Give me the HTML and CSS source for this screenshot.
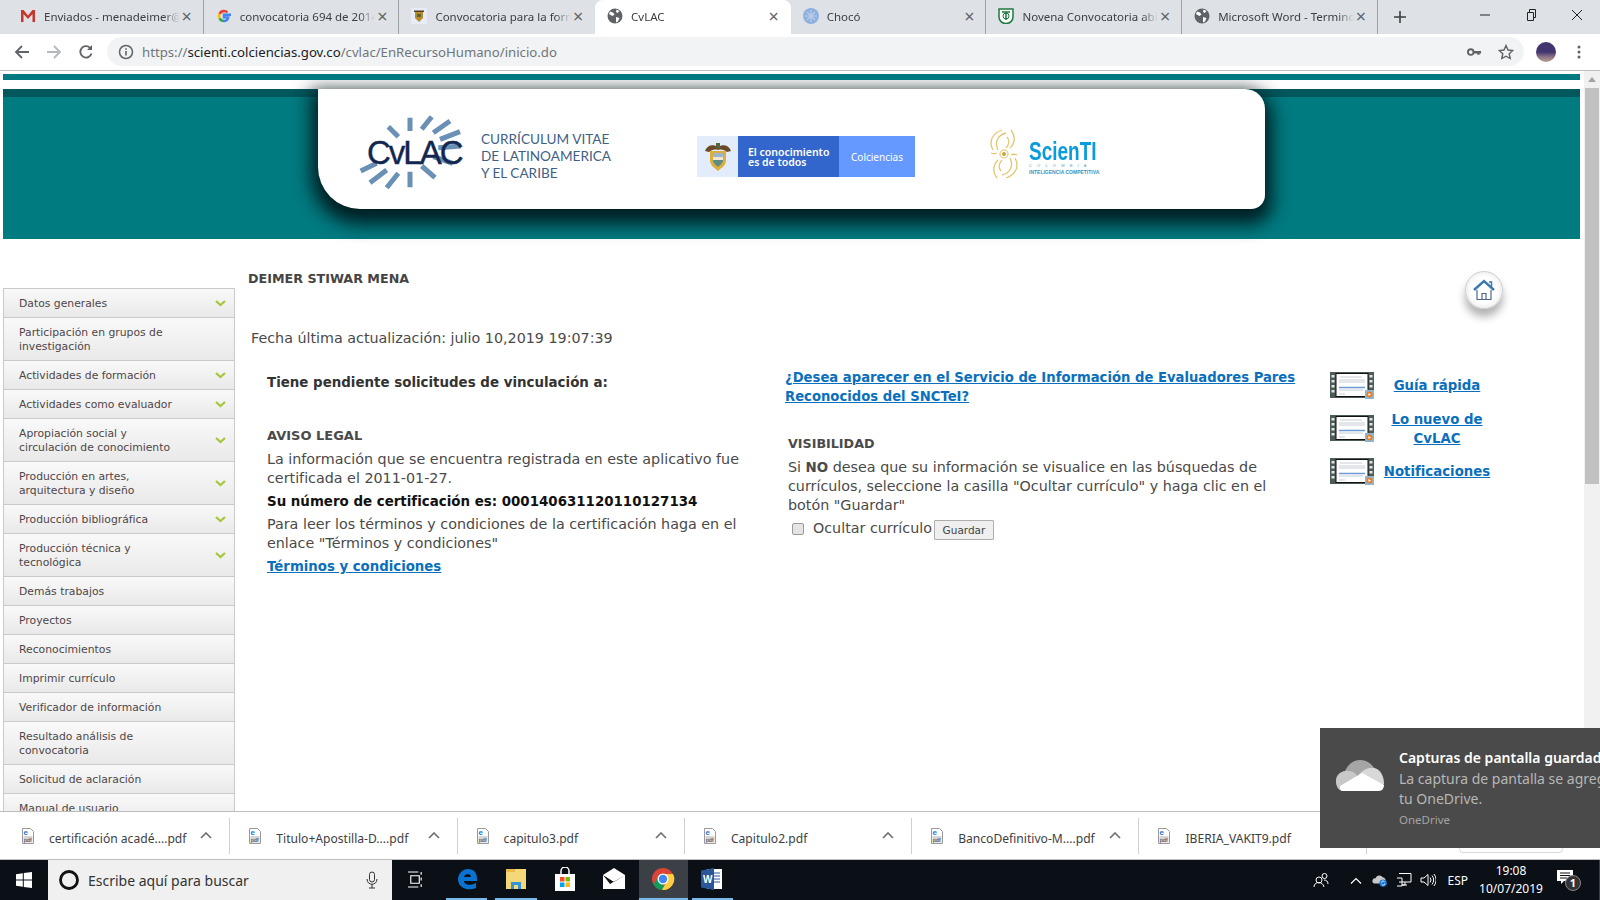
FILE: index.html
```html
<!DOCTYPE html>
<html lang="es">
<head>
    <meta charset="UTF-8">
    <title>CvLAC</title>
    <link rel="stylesheet" href="styles.css">
</head>
<body>
    <div class="tabstrip">
        <div class="tab">
            <svg class="favicon" viewBox="0 0 16 16"><path d="M1 2h2.500L8 7.500 12.500 2H15v12h-2.500V6L8 11 3.500 6v8H1z" fill="#c5372c"/></svg>
            <span class="tab-title">Enviados - menadeimer@gmail.com</span>
            <span class="tab-close">×</span>
        </div>
        <div class="tab">
            <svg class="favicon" viewBox="0 0 16 16"><path d="M15 6.800H8v2.600h4.200A4.500 4.500 0 0 1 8 13" fill="none" stroke="#4285f4" stroke-width="2.400"/><path d="M8 13a5 5 0 0 1-4.500-2.800" fill="none" stroke="#34a853" stroke-width="2.600"/><path d="M3.500 10.200a5 5 0 0 1 0-4.400" fill="none" stroke="#fbbc05" stroke-width="2.600"/><path d="M3.500 5.800A5 5 0 0 1 11.400 4.400" fill="none" stroke="#ea4335" stroke-width="2.600"/></svg>
            <span class="tab-title">convocatoria 694 de 2014 colciencias</span>
            <span class="tab-close">×</span>
        </div>
        <div class="tab">
            <svg class="favicon" viewBox="0 0 16 16"><rect width="16" height="16" fill="#e6ecf8"/><path d="M4 4h8v6l-4 4-4-4z" fill="#b98a2c"/><path d="M6 6h4v3H6z" fill="#55663a"/><path d="M3 2.500h10V4H3z" fill="#5a3d22"/></svg>
            <span class="tab-title">Convocatoria para la formación</span>
            <span class="tab-close">×</span>
        </div>
        <div class="tab tab-active">
            <svg class="favicon" viewBox="0 0 16 16"><circle cx="8" cy="8" r="7.500" fill="#5f6368"/><path d="M3 3.500l3 1 1.500 2-2 1.500-1-.5L2 6zM9 9l3.500 1-1.500 3.500-2 1zM9.500 1.500l3 1.500-2 2-1.500-1z" fill="#fff"/></svg>
            <span class="tab-title">CvLAC</span>
            <span class="tab-close">×</span>
        </div>
        <div class="tab">
            <svg class="favicon" viewBox="0 0 16 16"><circle cx="8" cy="8" r="8" fill="#8fb0df"/><path d="M8 2v12M2 8h12M4 4l8 8M12 4l-8 8" stroke="#b9cdea" stroke-width="1.200"/></svg>
            <span class="tab-title">Chocó</span>
            <span class="tab-close">×</span>
        </div>
        <div class="tab">
            <svg class="favicon" viewBox="0 0 16 16"><path d="M1 1h14v8a7 6.500 0 0 1-14 0z" fill="#fff" stroke="#1d7a3e" stroke-width="1.500"/><path d="M4 4h8M8 4v8" stroke="#1d7a3e" stroke-width="1.500"/><circle cx="8" cy="8" r="3" fill="none" stroke="#1d7a3e"/></svg>
            <span class="tab-title">Novena Convocatoria abierta</span>
            <span class="tab-close">×</span>
        </div>
        <div class="tab tab-last">
            <svg class="favicon" viewBox="0 0 16 16"><circle cx="8" cy="8" r="7.500" fill="#5f6368"/><path d="M3 3.500l3 1 1.500 2-2 1.500-1-.5L2 6zM9 9l3.500 1-1.500 3.500-2 1zM9.500 1.500l3 1.500-2 2-1.500-1z" fill="#fff"/></svg>
            <span class="tab-title">Microsoft Word - Terminos y condiciones</span>
            <span class="tab-close">×</span>
        </div>
        <svg class="new-tab" viewBox="0 0 12 12"><path d="M6 0v12M0 6h12" stroke="#3c4043" stroke-width="1.600"/></svg>
        <div class="window-buttons">
            <svg viewBox="0 0 12 12"><path d="M1 6h10" stroke="#222" stroke-width="1"/></svg>
            <svg viewBox="0 0 12 12"><path d="M2.500 3.500h6v8h-6zM4.500 3.500v-3h6v8h-2" fill="none" stroke="#222"/></svg>
            <svg viewBox="0 0 12 12"><path d="M1 1l10 10M11 1L1 11" stroke="#222"/></svg>
        </div>
    </div>

    <div class="toolbar">
        <svg class="tool-icon" viewBox="0 0 16 16"><path d="M15 8H2M8 2L2 8l6 6" fill="none" stroke="#5f6368" stroke-width="1.800"/></svg>
        <svg class="tool-icon" viewBox="0 0 16 16"><path d="M1 8h13M8 2l6 6-6 6" fill="none" stroke="#b4b7bb" stroke-width="1.800"/></svg>
        <svg class="tool-icon" viewBox="0 0 16 16"><path d="M13.500 9.500A5.700 5.700 0 1 1 12 3.800" fill="none" stroke="#5f6368" stroke-width="1.800"/><path d="M14 1v5H9z" fill="#5f6368"/></svg>
        <div class="omnibox">
            <svg class="info-icon" viewBox="0 0 16 16"><circle cx="8" cy="8" r="6.500" fill="none" stroke="#5f6368" stroke-width="1.500"/><path d="M8 7v4.500M8 4.300v1.500" stroke="#5f6368" stroke-width="1.600"/></svg>
            <span class="url"><span class="url-dim">https://</span>scienti.colciencias.gov.co<span class="url-dim">/cvlac/EnRecursoHumano/inicio.do</span></span>
            <svg class="key-icon" viewBox="0 0 16 10"><circle cx="4" cy="5" r="3" fill="none" stroke="#5f6368" stroke-width="2"/><path d="M7 4h8v2.500h-1.500V8H11V6.500H7z" fill="#5f6368"/></svg>
            <svg class="star-icon" viewBox="0 0 16 16"><path d="M8 1.500l2 4.500 4.800.5-3.600 3.200 1 4.800L8 12.200l-4.200 2.300 1-4.800L1.200 6.500 6 6z" fill="none" stroke="#5f6368" stroke-width="1.400"/></svg>
        </div>
        <div class="avatar"></div>
        <svg class="menu-dots" viewBox="0 0 4 16"><circle cx="2" cy="3" r="1.500" fill="#5f6368"/><circle cx="2" cy="8" r="1.500" fill="#5f6368"/><circle cx="2" cy="13" r="1.500" fill="#5f6368"/></svg>
    </div>

    <div class="viewport">
        <div class="page">
            <div class="top-line"></div>
            <div class="banner">
                <div class="banner-card">
                    <div class="cvlac-logo">
                        <svg class="cvlac-rays" viewBox="0 0 110 80">
                            <path d="M30.300 13.700L40.300 23.700M52 4.700V18M73.700 3.700L63.700 16.300M92 8L75.300 19.700M102 18.700L82 26.300M103 33L80.300 34.700M94.700 50.300L75.300 43.700M77 64.700L63.700 53M52 58.700V74.300M40.300 60.300L28.700 74.700M28.700 57L12 69.700M18.700 50.300L2.700 58" stroke="#6b90b6" stroke-width="5"/>
                        </svg>
                        <span class="cvlac-word">CvLAC</span>
                    </div>
                    <p class="cvlac-tagline">CURRÍCULUM VITAE<br>DE LATINOAMERICA<br>Y EL CARIBE</p>
                    <div class="gov-logo">
                        <div class="gov-shield">
                            <svg viewBox="0 0 28 30">
                                <path d="M1 9C3 3 9 2 14 5c5-3 11-2 13 4l-4 1c-2-2-6-3-9-2-3-1-7 0-9 2z" fill="#6b4a2a"/>
                                <path d="M12 1h4v5h-4z" fill="#55663a"/>
                                <path d="M6 9h16v9c0 6-5 8-8 11-3-3-8-5-8-11z" fill="#dcae3a"/>
                                <path d="M9 11h10v4H9z" fill="#9cb5cf"/>
                                <path d="M9 15h10v3H9z" fill="#eee8d2"/>
                                <path d="M9 18h10c0 3-3 5-5 7-2-2-5-4-5-7z" fill="#5c8c86"/>
                            </svg>
                        </div>
                        <div class="gov-motto">El conocimiento<br>es de todos</div>
                        <div class="gov-name">Colciencias</div>
                    </div>
                    <div class="scienti-logo">
                        <svg class="scienti-spiral" viewBox="0 0 32 50">
                            <g fill="none" stroke="#e3c672" stroke-width="1.300">
                                <g>
                                    <path d="M14 1C5 4 0 12 5 21M18 4C10 6 6 13 10 21"/>
                                    <path d="M23 1c4 5 5 12-1 18M19 8c3 3 2 8-1 11"/>
                                    <path d="M3 24c2 1 4 1 6 0"/>
                                </g>
                                <g transform="rotate(180 16 25)">
                                    <path d="M14 1C5 4 0 12 5 21M18 4C10 6 6 13 10 21"/>
                                    <path d="M23 1c4 5 5 12-1 18M19 8c3 3 2 8-1 11"/>
                                    <path d="M3 24c2 1 4 1 6 0"/>
                                </g>
                            </g>
                            <circle cx="16" cy="25" r="4" fill="none" stroke="#e8d595" stroke-width="1.500"/>
                            <circle cx="16" cy="25" r="2" fill="#cda23a"/>
                        </svg>
                        <div class="scienti-text">
                            <div class="scienti-word">ScienTI</div>
                            <div class="scienti-country">COLOMBIA</div>
                            <div class="scienti-sub">INTELIGENCIA COMPETITIVA</div>
                        </div>
                    </div>
                </div>
            </div>

            <div class="content">
                <ul class="sidenav">
                    <li class="has-arrow">Datos generales</li>
                    <li>Participación en grupos de<br>investigación</li>
                    <li class="has-arrow">Actividades de formación</li>
                    <li class="has-arrow">Actividades como evaluador</li>
                    <li class="has-arrow">Apropiación social y<br>circulación de conocimiento</li>
                    <li class="has-arrow">Producción en artes,<br>arquitectura y diseño</li>
                    <li class="has-arrow">Producción bibliográfica</li>
                    <li class="has-arrow">Producción técnica y<br>tecnológica</li>
                    <li>Demás trabajos</li>
                    <li>Proyectos</li>
                    <li>Reconocimientos</li>
                    <li>Imprimir currículo</li>
                    <li>Verificador de información</li>
                    <li>Resultado análisis de<br>convocatoria</li>
                    <li>Solicitud de aclaración</li>
                    <li>Manual de usuario</li>
                </ul>

                <div class="main">
                    <div class="name-row">
                        <h1 class="person-name">DEIMER STIWAR MENA</h1>
                        <div class="home-button">
                            <svg viewBox="0 0 24 22"><path d="M2 11L12 2l10 9" fill="none" stroke="#3d78ad" stroke-width="2.400"/><path d="M17 3h2.500v5" fill="none" stroke="#3d78ad" stroke-width="1.500"/><path d="M5 11v9.500h14V11M10 20.500v-6h4v6" fill="none" stroke="#50678a" stroke-width="1.200"/></svg>
                        </div>
                    </div>
                    <p class="updated">Fecha última actualización: julio 10,2019 19:07:39</p>

                    <div class="columns">
                        <div class="col-legal">
                            <p class="pending">Tiene pendiente solicitudes de vinculación a:</p>
                            <h2 class="section-title">AVISO LEGAL</h2>
                            <p>La información que se encuentra registrada en este aplicativo fue certificada el 2011-01-27.</p>
                            <p class="cert-number">Su número de certificación es: 000140631120110127134</p>
                            <p>Para leer los términos y condiciones de la certificación haga en el enlace "Términos y condiciones"</p>
                            <a class="link terms-link" href="#">Términos y condiciones</a>
                        </div>

                        <div class="col-visibility">
                            <a class="link evaluators-link" href="#">¿Desea aparecer en el Servicio de Información de Evaluadores Pares Reconocidos del SNCTeI?</a>
                            <div class="visibility-box">
                                <h2 class="section-title">VISIBILIDAD</h2>
                                <p>Si <b>NO</b> desea que su información se visualice en las búsquedas de currículos, seleccione la casilla "Ocultar currículo" y haga clic en el botón "Guardar"</p>
                                <div class="hide-row">
                                    <input type="checkbox" class="hide-check">
                                    <span>Ocultar currículo</span>
                                    <button class="save-button">Guardar</button>
                                </div>
                            </div>
                        </div>

                        <div class="col-help">
                            <div class="help-row">
                                <svg class="film-icon" viewBox="0 0 44 27"><use href="#film"/></svg>
                                <a class="link" href="#">Guía rápida</a>
                            </div>
                            <div class="help-row">
                                <svg class="film-icon" viewBox="0 0 44 27"><use href="#film"/></svg>
                                <a class="link" href="#">Lo nuevo de CvLAC</a>
                            </div>
                            <div class="help-row">
                                <svg class="film-icon" viewBox="0 0 44 27"><use href="#film"/></svg>
                                <a class="link" href="#">Notificaciones</a>
                            </div>
                        </div>
                    </div>
                </div>
            </div>
        </div>
        <div class="scrollbar">
            <svg class="scroll-arrow" viewBox="0 0 8 5"><path d="M4 0l4 5H0z" fill="#a3a3a3"/></svg>
            <div class="scroll-thumb"></div>
        </div>
    </div>

    <div class="downloads">
        <div class="download"><svg class="pdf-icon" viewBox="0 0 12 16"><use href="#pdf"/></svg><span class="download-name">certificación acadé....pdf</span><svg class="download-caret" viewBox="0 0 12 7"><path d="M1 6l5-5 5 5" fill="none" stroke="#6e6e6e" stroke-width="1.600"/></svg></div>
        <div class="download"><svg class="pdf-icon" viewBox="0 0 12 16"><use href="#pdf"/></svg><span class="download-name">Titulo+Apostilla-D....pdf</span><svg class="download-caret" viewBox="0 0 12 7"><path d="M1 6l5-5 5 5" fill="none" stroke="#6e6e6e" stroke-width="1.600"/></svg></div>
        <div class="download"><svg class="pdf-icon" viewBox="0 0 12 16"><use href="#pdf"/></svg><span class="download-name">capitulo3.pdf</span><svg class="download-caret" viewBox="0 0 12 7"><path d="M1 6l5-5 5 5" fill="none" stroke="#6e6e6e" stroke-width="1.600"/></svg></div>
        <div class="download"><svg class="pdf-icon" viewBox="0 0 12 16"><use href="#pdf"/></svg><span class="download-name">Capitulo2.pdf</span><svg class="download-caret" viewBox="0 0 12 7"><path d="M1 6l5-5 5 5" fill="none" stroke="#6e6e6e" stroke-width="1.600"/></svg></div>
        <div class="download"><svg class="pdf-icon" viewBox="0 0 12 16"><use href="#pdf"/></svg><span class="download-name">BancoDefinitivo-M....pdf</span><svg class="download-caret" viewBox="0 0 12 7"><path d="M1 6l5-5 5 5" fill="none" stroke="#6e6e6e" stroke-width="1.600"/></svg></div>
        <div class="download"><svg class="pdf-icon" viewBox="0 0 12 16"><use href="#pdf"/></svg><span class="download-name">IBERIA_VAKIT9.pdf</span><svg class="download-caret" viewBox="0 0 12 7"><path d="M1 6l5-5 5 5" fill="none" stroke="#6e6e6e" stroke-width="1.600"/></svg></div>
        <button class="show-all"></button>
    </div>

    <div class="taskbar">
        <div class="start-button">
            <svg viewBox="0 0 16 16"><path d="M0 2.200L6.800 1.200V7.500H0zM7.800 1L16 0v7.500H7.800zM0 8.500h6.800v6.300L0 13.800zM7.800 8.500H16V16l-8.200-1.100z" fill="#fff"/></svg>
        </div>
        <div class="search-box">
            <svg class="cortana" viewBox="0 0 22 22"><circle cx="11" cy="11" r="8.500" fill="none" stroke="#111" stroke-width="2.800"/></svg>
            <span class="search-text">Escribe aquí para buscar</span>
            <svg class="mic" viewBox="0 0 12 18"><rect x="3.500" y="1" width="5" height="10" rx="2.500" fill="none" stroke="#333"/><path d="M1 8c0 7 10 7 10 0M6 13v4M3 17h6" fill="none" stroke="#333"/></svg>
        </div>
        <div class="task-icons">
            <div class="task-icon">
                <svg viewBox="0 0 18 18"><path d="M1 1h11M1 17h11M4 5h9v8H4zM15 1v3M15 7v3M15 14v3" fill="none" stroke="#fff" stroke-width="1.200"/></svg>
            </div>
            <div class="task-icon task-open">
                <svg viewBox="0 0 24 24"><path d="M3 13C3 6 8 2 13 2c6 0 9 4 9 10v2H9c0 4 7 5 12 2v5c-7 3-17 1-18-8zm6-3h7c0-4-6-4-7 0z" fill="#0a72d0"/></svg>
            </div>
            <div class="task-icon task-open">
                <svg viewBox="0 0 24 24"><path d="M2 2h20v20H2z" fill="#f6d778"/><path d="M2 2h9v3H2z" fill="#e9b949"/><path d="M7 22v-7h10v7h-3v-4h-4v4z" fill="#2f95d6"/></svg>
            </div>
            <div class="task-icon">
                <svg viewBox="0 0 24 24"><path d="M2 7h20v17H2z" fill="#fff"/><path d="M8 8V4a4 4 0 0 1 8 0v4" fill="none" stroke="#fff" stroke-width="1.500"/><path d="M7 10h4.500v4.500H7z" fill="#f25022"/><path d="M12.500 10H17v4.500h-4.500z" fill="#7fba00"/><path d="M7 15.500h4.500V20H7z" fill="#00a4ef"/><path d="M12.500 15.500H17V20h-4.500z" fill="#ffb900"/></svg>
            </div>
            <div class="task-icon">
                <svg viewBox="0 0 24 24"><path d="M1 8l11-7 11 7v14H1z" fill="#fff"/><path d="M1 8l11 7 11-7-15 9z" fill="#111"/></svg>
            </div>
            <div class="task-icon task-open task-active">
                <svg viewBox="0 0 24 24"><circle cx="12" cy="12" r="11" fill="#db4437"/><path d="M12 23a11 11 0 0 1-9.500-5.500L8 8l4 8z" fill="#0f9d58"/><path d="M12 7h10a11 11 0 0 1-11 16l5-9z" fill="#ffcd40"/><circle cx="12" cy="12" r="5.500" fill="#fff"/><circle cx="12" cy="12" r="4.200" fill="#4285f4"/></svg>
            </div>
            <div class="task-icon task-open">
                <svg viewBox="0 0 24 24"><path d="M7 2h15v20H7z" fill="#fff"/><path d="M14 6h6M14 9h6M14 12h6M14 15h6" stroke="#2b579a"/><path d="M1 3.500L14 1v22L1 20.500z" fill="#2b579a"/><text x="3" y="16" font-family="Liberation Sans, sans-serif" font-size="10" font-weight="700" fill="#fff">W</text></svg>
            </div>
        </div>
        <div class="tray">
            <svg class="tray-icon" viewBox="0 0 16 16"><circle cx="6" cy="8" r="3" fill="none" stroke="#fff"/><path d="M1 15c0-6 9-6 10 0" fill="none" stroke="#fff"/><circle cx="11.500" cy="4" r="2.500" fill="none" stroke="#fff"/><path d="M11 8c2 0 4 1 4 4" fill="none" stroke="#fff"/></svg>
            <svg class="tray-caret" viewBox="0 0 12 7"><path d="M1 6.500l5-5 5 5" fill="none" stroke="#fff" stroke-width="1.200"/></svg>
            <svg class="tray-icon" viewBox="0 0 18 16"><path d="M3 12a3 3 0 0 1 1-6 4.500 4.500 0 0 1 8-1 3.500 3.500 0 0 1 3 5v2z" fill="#c9c9c9"/><circle cx="12.500" cy="11.500" r="4.200" fill="#1a78d2"/><path d="M10.500 11a2 2 0 0 1 3.600-1M14.500 12a2 2 0 0 1-3.600 1" fill="none" stroke="#fff"/></svg>
            <svg class="tray-icon" viewBox="0 0 16 16"><path d="M3 1.500h12V10H3M1 6h5v8H1M9 10v3h-3M6 13h5" fill="none" stroke="#fff"/></svg>
            <svg class="tray-icon" viewBox="0 0 16 16"><path d="M1 6h3l4-3.500v11L4 10H1z" fill="none" stroke="#fff"/><path d="M10 5.500a4 4 0 0 1 0 5M12 3.500a7 7 0 0 1 0 9M14 2a9.500 9.500 0 0 1 0 12" fill="none" stroke="#fff"/></svg>
            <span class="tray-lang">ESP</span>
            <div class="tray-clock">19:08<br>10/07/2019</div>
            <div class="tray-action">
                <svg viewBox="0 0 16 15"><path d="M0 0h16v11H7l-3 3v-3H0z" fill="#fff"/><path d="M3 3h10M3 5.500h10M3 8h7" stroke="#0b0f16"/></svg>
                <span class="action-badge">1</span>
            </div>
        </div>
    </div>

    <div class="toast">
        <svg class="toast-cloud" viewBox="0 0 48 31">
            <path d="M11 31C5 31 0 27 0 21s4-9 9-10c3-7 9-11 15-11 6 0 11 3 14 8l-11 13z" fill="#a5a5a5"/>
            <path d="M6 31C2 30 0 26 0 21s4-9 9-10c5-1 10 1 13 6l-6 14z" fill="#c8c8c8"/>
            <path d="M22 16c5-8 14-10 19-7 5 3 7 9 7 15l-8 7z" fill="#d8d8d8"/>
            <path d="M6 31h37c3 0 5-3 5-6L26 13 4 26c0 2 0 4 2 5z" fill="#fff"/>
        </svg>
        <div class="toast-body">
            <div class="toast-title">Capturas de pantalla guardadas</div>
            <div class="toast-text">La captura de pantalla se agregó a<br>tu OneDrive.</div>
            <div class="toast-app">OneDrive</div>
        </div>
    </div>

    <svg class="svg-defs">
        <symbol id="film" viewBox="0 0 44 27">
            <rect x="0" y="0" width="44" height="26" fill="#4c5a58"/>
            <rect x="6" y="1.500" width="32" height="23" fill="#fff" stroke="#111"/>
            <path d="M1.500 3h3v2.500h-3zM1.500 8h3v2.500h-3zM1.500 13h3v2.500h-3zM1.500 18h3v2.500h-3zM39.500 3h3v2.500h-3zM39.500 8h3v2.500h-3zM39.500 13h3v2.500h-3zM39.500 18h3v2.500h-3z" fill="#dfe5e4"/>
            <path d="M10 5h22M9 8h26M9 10h26" stroke="#b9c0cc" stroke-width="0.800"/>
            <path d="M9 15.500h26" stroke="#6d9bd2" stroke-width="1.500"/>
            <path d="M9 18h24M9 22h6" stroke="#b9c0cc" stroke-width="0.800"/>
            <rect x="35" y="18" width="9" height="9" fill="#8eb7cf"/>
            <circle cx="39.500" cy="22.500" r="3" fill="#f27b1c"/>
            <path d="M38.500 21v3l2.500-1.500z" fill="#fff"/>
        </symbol>
        <symbol id="pdf" viewBox="0 0 12 16">
            <path d="M.5.500h8l3 3v12H.500z" fill="#fff" stroke="#9a9a9a"/>
            <rect x="1.500" y="8" width="9" height="6.500" fill="#d5d5d5"/>
            <text x="1.500" y="7" font-family="Liberation Sans, sans-serif" font-size="8" font-weight="700" fill="#1a78d2">e</text>
            <text x="1.800" y="13.500" font-family="Liberation Sans, sans-serif" font-size="5.500" fill="#333">pdf</text>
        </symbol>
    </svg>
</body>
</html>
```

FILE: styles.css
```css
* {
    box-sizing: border-box;
}

body, html {
    height: 100%;
    margin: 0;
    background-color: #fff;
    font-family: "DejaVu Sans", sans-serif;
    overflow: hidden;
}

p, h1, h2, ul {
    margin: 0;
    padding: 0;
}

/* browser chrome */
.tabstrip {
    display: flex;
    align-items: center;
    height: 34px;
    padding-left: 8px;
    background-color: #dee1e6;
    font-family: "Noto Sans", sans-serif;
    font-size: 11.5px;
    color: #3c4043;
}

.tab {
    position: relative;
    display: flex;
    align-items: center;
    flex: none;
    width: 195.700px;
    height: 34px;
    padding: 0 9px 2px 12px;
    border-right: 1px solid #9ea1a6;
}

.tab:nth-child(3),
.tab:nth-child(4) {
    border-right-color: transparent;
}

.tab-active {
    background-color: #fff;
    border-radius: 8px 8px 0 0;
}

.favicon {
    flex: none;
    width: 16px;
    height: 16px;
    margin-right: 8px;
}

.tab-title {
    flex: 1;
    overflow: hidden;
    white-space: nowrap;
    -webkit-mask-image: linear-gradient(to right, #000 88%, transparent);
    mask-image: linear-gradient(to right, #000 88%, transparent);
}

.tab-close {
    flex: none;
    width: 14px;
    font-size: 18px;
    line-height: 1;
    text-align: center;
    color: #5f6368;
}

.new-tab {
    width: 12px;
    height: 12px;
    margin-left: 16px;
}

.window-buttons {
    display: flex;
    gap: 34px;
    margin-left: auto;
    margin-right: 17px;
    margin-top: -5px;
}

.window-buttons svg {
    width: 12px;
    height: 12px;
}

.toolbar {
    display: flex;
    align-items: center;
    height: 37px;
    padding: 0 0 1px 14px;
    background-color: #fff;
    border-bottom: 1px solid #bdbdbd;
}

.tool-icon {
    flex: none;
    width: 16px;
    height: 16px;
    margin-right: 16px;
}

.omnibox {
    display: flex;
    align-items: center;
    width: 1417px;
    height: 29px;
    margin-left: -3px;
    padding: 0 10px 0 11px;
    background-color: #f1f3f4;
    border-radius: 15px;
    font-family: "Noto Sans", sans-serif;
    font-size: 13.200px;
    color: #202124;
}

.info-icon {
    width: 16px;
    height: 16px;
    margin-right: 8px;
}

.url {
    flex: 1;
}

.url-dim {
    color: #70757a;
}

.key-icon {
    width: 15px;
    height: 10px;
    margin-right: 16px;
}

.star-icon {
    width: 16px;
    height: 16px;
}

.avatar {
    flex: none;
    width: 20px;
    height: 20px;
    margin-left: 12px;
    border-radius: 50%;
    background: linear-gradient(#43356e 50%, #8d7488 75%, #b59f8b);
}

.menu-dots {
    flex: none;
    width: 4px;
    height: 16px;
    margin-left: 21px;
}

/* page area */
.viewport {
    display: flex;
    height: 740px;
    overflow: hidden;
}

.page {
    flex: 1;
    min-width: 0;
    padding-top: 3px;
    padding-right: 4px;
}

.top-line {
    height: 6px;
    margin-left: 3px;
    background-color: #007a80;
}

.banner {
    height: 150px;
    margin: 9px 0 0 3px;
    background: linear-gradient(#00575c 8px, #007b80 8px);
    position: relative;
}

.banner-card {
    display: flex;
    align-items: center;
    width: 947px;
    height: 120px;
    margin-left: 315px;
    padding-top: 12px;
    background-color: #fff;
    border-radius: 0 20px 14px 42px;
    box-shadow: 0 8px 18px 7px rgba(0, 20, 24, 0.9);
    clip-path: inset(-9px -30px -40px -30px);
}

.cvlac-logo {
    position: relative;
    flex: none;
    width: 110px;
    height: 80px;
    margin-left: 40px;
    margin-top: -4px;
}

.cvlac-rays {
    width: 110px;
    height: 80px;
}

.cvlac-word {
    position: absolute;
    left: 9px;
    top: 20px;
    font-family: "Liberation Sans", sans-serif;
    font-size: 33px;
    line-height: 40px;
    letter-spacing: -2px;
    color: #12264f;
    -webkit-text-stroke: 0.4px #12264f;
}

.cvlac-tagline {
    flex: none;
    width: 215px;
    margin-left: 13px;
    margin-right: 1px;
    margin-top: 2px;
    font-family: "Lato", sans-serif;
    font-size: 13.600px;
    line-height: 17px;
    color: #3f5f85;
}

.gov-logo {
    display: flex;
    flex: none;
    width: 218px;
    height: 41px;
    margin-top: 3px;
    font-family: "Noto Sans", sans-serif;
    color: #fff;
}

.gov-shield {
    display: flex;
    align-items: center;
    justify-content: center;
    width: 41px;
    background-color: #e3ecfb;
}

.gov-shield svg {
    width: 28px;
    height: 30px;
}

.gov-motto {
    display: flex;
    align-items: center;
    width: 101px;
    padding-left: 10px;
    background-color: #3366cc;
    font-size: 10.5px;
    font-weight: 600;
    line-height: 10px;
}

.gov-name {
    display: flex;
    align-items: center;
    justify-content: center;
    width: 76px;
    background-color: #6699ff;
    font-size: 10px;
}

.scienti-logo {
    display: flex;
    align-items: center;
    flex: none;
    margin-left: 73px;
    margin-top: -2px;
}

.scienti-spiral {
    width: 32px;
    height: 50px;
}

.scienti-text {
    margin-left: 9px;
    margin-top: 6px;
    width: 68px;
    font-family: "Liberation Sans", sans-serif;
}

.scienti-word {
    font-size: 25px;
    font-weight: 700;
    line-height: 24px;
    color: #0a9bdc;
    transform-origin: left center;
    transform: scaleX(0.76);
    white-space: nowrap;
}

.scienti-country {
    font-size: 4px;
    line-height: 6px;
    letter-spacing: 5.200px;
    color: #5d9fc2;
}

.scienti-sub {
    font-size: 5px;
    font-weight: 700;
    line-height: 7px;
    color: #3c93c0;
    white-space: nowrap;
}

.content {
    display: flex;
    align-items: flex-start;
    margin-left: 3px;
}

.sidenav {
    flex: none;
    width: 232px;
    margin-top: 49px;
    list-style: none;
    border: 1px solid #cacaca;
    border-bottom: none;
    font-size: 10.800px;
    line-height: 14px;
    color: #4f4648;
}

.sidenav li {
    padding: 8px 15px 6px;
    border-bottom: 1px solid #cacaca;
    background: linear-gradient(#f9f9f9, #e9e9e9);
}

.sidenav .has-arrow {
    background-image:
        url("data:image/svg+xml,%3Csvg xmlns='http://www.w3.org/2000/svg' width='11' height='7'%3E%3Cpath d='M1 1l4.500 4L10 1' fill='none' stroke='%23a5c63b' stroke-width='2.200'/%3E%3C/svg%3E"),
        linear-gradient(#f9f9f9, #e9e9e9);
    background-repeat: no-repeat;
    background-position: right 8px center, 0 0;
}

.main {
    flex: 1;
    min-width: 0;
    padding-left: 13px;
    font-size: 14.300px;
    line-height: 19px;
    color: #4a4a4a;
}

.name-row {
    display: flex;
    justify-content: space-between;
    align-items: flex-start;
    height: 90px;
    padding-top: 30px;
    padding-right: 77px;
}

.person-name {
    font-size: 12.700px;
    font-weight: 700;
    line-height: 19px;
    color: #444;
}

.home-button {
    display: flex;
    align-items: center;
    justify-content: center;
    width: 38px;
    height: 38px;
    margin-top: 2px;
    border: 1px solid #cfcfcf;
    border-radius: 50%;
    background: radial-gradient(#fff 50%, #dedede);
    box-shadow: 0 8px 8px rgba(0, 0, 0, 0.3);
}

.home-button svg {
    width: 24px;
    height: 22px;
}

.updated {
    margin-left: 3px;
}

.columns {
    display: flex;
    align-items: flex-start;
    margin-top: 25px;
}

.col-legal {
    flex: none;
    width: 537px;
    padding-left: 19px;
    padding-right: 32px;
}

.pending {
    font-size: 13.400px;
    font-weight: 700;
    color: #333;
}

.section-title {
    margin-top: 34px;
    margin-bottom: 5px;
    font-size: 13px;
    line-height: 19px;
    font-weight: 700;
    color: #4a4a4a;
}

.cert-number {
    margin: 4px 0;
    font-size: 13.400px;
    font-weight: 700;
    color: #111;
}

.link {
    color: #0a6fbd;
    font-size: 13.300px;
    font-weight: 700;
    text-decoration: underline;
}

.terms-link {
    display: block;
    margin-top: 4px;
}

.col-visibility {
    flex: none;
    width: 545px;
    margin-top: -5px;
    padding-right: 20px;
}

.evaluators-link {
    display: block;
    font-size: 13.200px;
}

.visibility-box {
    margin-left: 3px;
}

.visibility-box .section-title {
    margin-top: 28px;
    margin-bottom: 5px;
    font-size: 12.700px;
}

.visibility-box b {
    font-size: 13.400px;
}

.hide-row {
    display: flex;
    align-items: center;
    margin-top: 2px;
}

.hide-check {
    appearance: none;
    -webkit-appearance: none;
    width: 12px;
    height: 12px;
    margin: 0 9px 0 4px;
    border: 1px solid #9a9a9a;
    border-radius: 2px;
    background-color: #e4e4e4;
}

.save-button {
    height: 20px;
    width: 60px;
    padding: 0;
    margin-top: 3px;
    margin-left: 2px;
    border: 1px solid #adadad;
    border-radius: 1px;
    background-color: #efefef;
    font-family: inherit;
    font-size: 10.5px;
    color: #444;
}

.col-help {
    flex: none;
    width: 180px;
    margin-top: -9px;
}

.help-row {
    display: flex;
    align-items: center;
    height: 43px;
}

.film-icon {
    flex: none;
    width: 44px;
    height: 27px;
}

.help-row .link {
    flex: none;
    width: 126px;
    text-align: center;
}

.scrollbar {
    flex: none;
    width: 16px;
    background-color: #f1f1f1;
    padding: 6px 1px 0;
    display: flex;
    flex-direction: column;
    align-items: center;
}

.scroll-arrow {
    width: 8px;
    height: 5px;
}

.scroll-thumb {
    width: 100%;
    height: 396px;
    margin-top: 6px;
    background-color: #c1c1c1;
}

/* download shelf */
.downloads {
    position: relative;
    display: flex;
    align-items: center;
    height: 49px;
    padding-left: 3px;
    border-top: 1px solid #bdbdbd;
    border-bottom: 1px solid #bdbdbd;
    background-color: #fff;
    font-family: "Noto Sans", sans-serif;
    font-size: 12.100px;
    color: #3c4043;
}

.download {
    display: flex;
    align-items: center;
    flex: none;
    width: 227.300px;
    height: 36px;
    padding-left: 19px;
    padding-top: 6px;
    border-right: 1px solid #cfcfcf;
}

.pdf-icon {
    flex: none;
    width: 12px;
    height: 16px;
    margin-right: 15px;
    margin-top: -5px;
}

.download-name {
    flex: 1;
    white-space: nowrap;
}

.download-caret {
    flex: none;
    width: 12px;
    height: 7px;
    margin-right: 17px;
    margin-top: -7px;
}

.show-all {
    position: absolute;
    right: 37px;
    top: 6px;
    width: 104px;
    height: 35px;
    border: 1px solid #d9d9d9;
    border-radius: 4px;
    background-color: #fff;
}

/* windows taskbar */
.taskbar {
    display: flex;
    height: 40px;
    background-color: #0b0f16;
}

.start-button {
    display: flex;
    align-items: center;
    justify-content: center;
    flex: none;
    width: 48px;
}

.start-button svg {
    width: 16px;
    height: 16px;
}

.search-box {
    display: flex;
    align-items: center;
    flex: none;
    width: 344px;
    padding: 0 14px 0 10px;
    background-color: #f0f0f0;
    font-family: "Noto Sans", sans-serif;
    font-size: 14px;
    color: #333;
}

.cortana {
    width: 22px;
    height: 22px;
    margin-right: 8px;
}

.search-text {
    flex: 1;
}

.mic {
    width: 12px;
    height: 18px;
}

.task-icons {
    display: flex;
    flex: none;
    margin-left: -1px;
}

.task-icon {
    display: flex;
    align-items: center;
    justify-content: center;
    width: 49.100px;
    height: 40px;
    border-bottom: 2px solid transparent;
}

.task-icon svg {
    width: 24px;
    height: 24px;
}

.task-icon:first-child {
    width: 51.400px;
    padding-right: 3px;
}

.task-icon:first-child svg {
    width: 17px;
    height: 17px;
}

.task-open {
    position: relative;
}

.task-open::after {
    content: "";
    position: absolute;
    left: 4px;
    right: 4px;
    bottom: -2px;
    height: 2px;
    background-color: #76b9ed;
}

.task-active {
    background-color: #3b4046;
}

.task-active::after {
    left: 0;
    right: 0;
}

.tray {
    display: flex;
    align-items: center;
    margin-left: auto;
    padding-right: 5px;
    border-right: 1px solid #3c4046;
    color: #fff;
    font-family: "Noto Sans", sans-serif;
    font-size: 12px;
}

.tray-icon {
    width: 16px;
    height: 16px;
    margin-right: 8px;
}

.tray-icon:first-child {
    margin-right: 21px;
}

.tray-caret {
    width: 12px;
    height: 7px;
    margin-right: 10px;
}

.tray-lang {
    margin-left: 3px;
    margin-right: 8px;
}

.tray-clock {
    width: 70px;
    line-height: 18px;
    text-align: center;
}

.tray-action {
    position: relative;
    width: 30px;
    height: 24px;
    margin-left: 11px;
    margin-right: 7px;
}

.tray-action svg {
    position: absolute;
    left: 0;
    top: 2px;
    width: 16px;
    height: 15px;
}

.action-badge {
    position: absolute;
    left: 8px;
    top: 7px;
    width: 16px;
    height: 16px;
    border-radius: 50%;
    background-color: #333;
    border: 1px solid #888;
    font-size: 11px;
    font-weight: 700;
    line-height: 14px;
    text-align: center;
}

/* onedrive toast */
.toast {
    position: absolute;
    left: 1320px;
    top: 728px;
    display: flex;
    width: 280px;
    height: 120px;
    overflow: hidden;
    background-color: #4a4a4a;
    font-family: "Noto Sans", sans-serif;
    white-space: nowrap;
}

.toast-cloud {
    flex: none;
    width: 48px;
    height: 31px;
    margin: 32px 15px 0 16px;
}

.toast-body {
    padding-top: 20px;
}

.toast-title {
    font-size: 14px;
    font-weight: 600;
    line-height: 20px;
    color: #fff;
}

.toast-text {
    margin-top: 1px;
    font-size: 14px;
    line-height: 20px;
    color: #b7b7b7;
}

.toast-app {
    margin-top: 2px;
    font-size: 11.5px;
    line-height: 17px;
    color: #a3a3a3;
}

.svg-defs {
    display: none;
}
```
